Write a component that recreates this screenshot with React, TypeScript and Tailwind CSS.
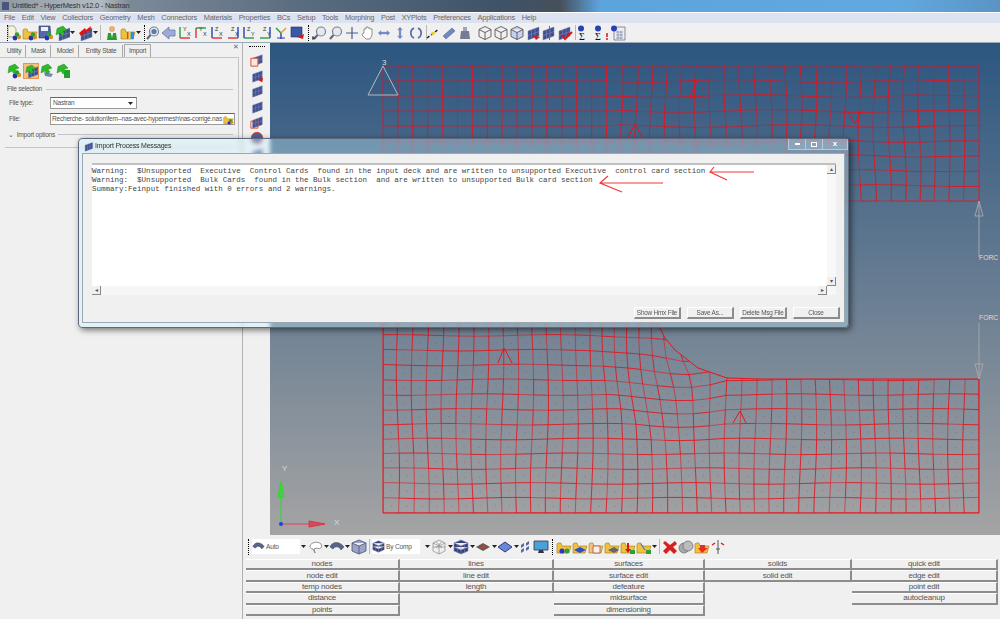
import type { ReactNode } from "react";

const sans = "font-['Liberation_Sans',Arial,sans-serif]";

const hash = (a: number, b: number) => {
  const s = Math.sin(a * 12.9898 + b * 78.233) * 43758.5453;
  return s - Math.floor(s);
};

type Pt = [number, number];

// top half of the part, mostly regular with a distorted band in the middle
const topVertex = (i: number, j: number): Pt => {
  const x = 383 + 14.9 * i;
  const y = 66 + 15 * j;
  const band = i > 15 && i < 37 ? 1 : i >= 37 ? 0.4 : 0;
  const dx = i === 0 || i === 40 ? 0 : band * 1.8 * Math.sin(i * 0.45 + j * 0.6);
  const dy = j === 0 || j === 9 ? 0 : band * 1.4 * Math.sin(i * 0.5 - j * 0.7);
  return [x + dx, y + dy];
};

// lower half: grid pushed away from the fillet
const cx = 725;
const cy = 325;
const bottomVertex = (i: number, j: number): Pt => {
  let x = 383 + 14.9 * i;
  let y = 513 - 14.8 * j;
  if (i > 0 && i < 40) x += 1.6 * Math.sin(i * 0.4 + j * 0.45);
  if (j > 0) y += 0.8 * Math.sin(i * 0.6 - j * 0.7);
  const dx = x - cx;
  const dy = y - cy;
  const d = Math.max(Math.hypot(dx, dy), 1);
  if (d < 135 && dx < 0) {
    const w = Math.min(1, (-dx / d) * 1.2);
    const p = (28 - (d * 28) / 135) * w;
    x += (dx / d) * p;
    y += (dy / d) * p;
  }
  return [x, y];
};

const MeshGrid = ({ at, cols, rows }: { at: (i: number, j: number) => Pt; cols: number; rows: number }) => {
  const out: ReactNode[] = [];
  for (let i = 0; i <= cols; i++) {
    for (let j = 0; j <= rows; j++) {
      const a = at(i, j);
      if (i < cols) {
        const b = at(i + 1, j);
        out.push(<line key={`h${i}-${j}`} x1={a[0]} y1={a[1]} x2={b[0]} y2={b[1]} opacity={hash(i, j) > 0.45 ? 0.95 : 0.65} />);
      }
      if (j < rows) {
        const b = at(i, j + 1);
        out.push(<line key={`v${i}-${j}`} x1={a[0]} y1={a[1]} x2={b[0]} y2={b[1]} opacity={hash(j, i) > 0.45 ? 0.95 : 0.65} />);
      }
      if (i < cols && j < rows) {
        const c = at(i + 1, j + 1);
        out.push(<rect key={`d${i}-${j}`} x={(a[0] + c[0]) / 2} y={(a[1] + c[1]) / 2} width={1} height={1} fill="#e8121c" stroke="none" opacity={0.4} />);
      }
    }
  }
  return <g stroke="#e8121c" strokeWidth={0.9}>{out}</g>;
};

const filletEdge = "M655 320L660 328L665 338L675 350L698 368L727 378L760 379L979 379";

const Viewport = () => (
  <svg viewBox="270 43 730 492" className="block w-[730px] h-[492px]">
    <defs>
      <clipPath id="lowerPart">
        <path d={`M383 320L655 320L660 328L665 338L675 350L698 368L727 378L760 379L979 379L979 513L383 513Z`} />
      </clipPath>
    </defs>
    <MeshGrid at={topVertex} cols={40} rows={9} />
    <g fill="none" stroke="#e8121c" strokeWidth={1}>
      <path d="M697 82L689 98L705 97" />
      <path d="M628 137L635 124L642 137M847 110L855 124L862 110" />
    </g>
    <g clipPath="url(#lowerPart)">
      <MeshGrid at={bottomVertex} cols={40} rows={13} />
    </g>
    <g fill="none" stroke="#e8121c" strokeWidth={1}>
      <path d={filletEdge} />
      <path d="M383 320L383 513L979 513L979 379" />
      <path d="M498 363L504 348L512 363M733 423L740 411L746 423" />
    </g>
    {/* constraint and loads */}
    <g fill="none" stroke="#b4b8bc" strokeWidth={1}>
      <path d="M383 66L368 95L398 95Z" />
    </g>
    <g fill="none" stroke="#a2a6aa" strokeWidth={1}>
      <path d="M979 201L979 257M979 201L975 216L983 216Z" />
      <path d="M979 323L979 379M979 379L975 364L983 364Z" />
    </g>
    <g fill="#d8dce0" fontSize={8} fontFamily="'Liberation Sans',Arial,sans-serif">
      <text x={382} y={65}>3</text>
      <text x={979} y={260} fontSize={6.8}>FORC</text>
      <text x={979} y={320} fontSize={6.8}>FORC</text>
      <text x={282} y={471}>Y</text>
      <text x={334} y={525}>X</text>
    </g>
    {/* global axes */}
    <path d="M281 524L281 490" stroke="#22e022" strokeWidth={1} />
    <path d="M281 481L278 497L284 497Z" fill="#50c850" stroke="#22e022" strokeWidth={1} />
    <path d="M281 524L310 524" stroke="#e05060" strokeWidth={1.2} />
    <path d="M325 524L309 521L309 527Z" fill="#c85060" stroke="#e83040" strokeWidth={1} />
    <circle cx={281} cy={524} r={2} fill="#2040e0" />
  </svg>
);

const Balls = () => (
  <>
    <circle cx={9} cy={13} r={2.4} fill="#2030c0" />
    <circle cx={13} cy={12} r={2.2} fill="#e09020" />
    <circle cx={11} cy={9.5} r={2.2} fill="#30a030" />
  </>
);
const Plate = ({ x = 0, y = 0 }: { x?: number; y?: number }) => (
  <g transform={`translate(${x} ${y})`}>
    <path d="M3 6L14 2L14 11L3 15Z" fill="#3f4f8f" stroke="#8088b0" strokeWidth={0.5} />
    <path d="M6.5 5L6.5 14M10 3.5L10 12.5M3 10.5L14 6.5" stroke="#7f88b8" strokeWidth={0.6} />
  </g>
);
const GreenArrow = () => <path d="M9 1L13 5L9 6.5L11 9L8 11L6 8L2 10L3 3.5Z" fill="#2fb82a" stroke="#15801a" strokeWidth={0.4} />;
const Folder = ({ c = "#f0c040" }: { c?: string }) => (
  <path d="M1 5L1 14L13 14L15 7L6 7L5 4L2 4Z" fill={c} stroke="#a07820" strokeWidth={0.6} />
);
const Axis = ({ a, b, la, lb, ca, cb }: { a: string; b: string; la: string; lb: string; ca: string; cb: string }) => (
  <>
    <path d={a} stroke={ca} strokeWidth={1.4} fill="none" />
    <path d={b} stroke={cb} strokeWidth={1.4} fill="none" />
    <text x={6} y={6} fontSize={5.5} fill="#333">{la}</text>
    <text x={10} y={11} fontSize={5.5} fill="#333">{lb}</text>
  </>
);
const Cube = ({ fill = "none" }: { fill?: string }) => (
  <path d="M8 1.5L14 4.5L14 11.5L8 14.5L2 11.5L2 4.5ZM2 4.5L8 7.5L14 4.5M8 7.5L8 14.5" fill={fill} stroke="#444" strokeWidth={0.8} />
);
const Lens = () => (
  <>
    <circle cx={9} cy={6.5} r={4.5} fill="#e4e8f0" stroke="#7a8090" strokeWidth={1.2} />
    <path d="M5.5 10L2 14" stroke="#606878" strokeWidth={2} />
  </>
);

const icons: Record<string, ReactNode> = {
  newModel: (<><path d="M2 1L8 1L10 4L10 12L2 12Z" fill="#f4f4d8" stroke="#777" strokeWidth={0.6} /><Balls /></>),
  openModel: (<><Folder /><Balls /></>),
  saveModel: (<><path d="M1 1L12 1L13 13L1 13Z" fill="#5568a8" stroke="#334" strokeWidth={0.6} /><path d="M3 2L10 2L10 6L3 6Z" fill="#eef" /><Balls /></>),
  importPlate: (<><Plate x={2} y={1} /><GreenArrow /></>),
  exportPlate: (<><Plate x={1} y={1} /><path d="M2 8L8 3L9 5L14 1L13 6L10 6L9 8L4 11Z" fill="#d81818" /></>),
  person: (<><circle cx={8} cy={4} r={3} fill="#e0b080" /><path d="M3 15L4 8L12 8L13 15Z" fill="#2c9c30" /><path d="M7 8L9 8L8 13Z" fill="#fff" /></>),
  colorFolder: (<><Folder /><path d="M7 7L14 7L14 14L7 14Z" fill="#e84030" /><path d="M10 7L14 7L14 14L10 14Z" fill="#3090e0" /><path d="M8.5 7L10.5 7L10.5 14L8.5 14Z" fill="#f0e030" /></>),
  globeLens: (<><Lens /><circle cx={9} cy={6.5} r={2.6} fill="#5878b8" /></>),
  leftArrow: <path d="M1 8L8 2L8 5L14 5L14 11L8 11L8 14Z" fill="#a0aad8" stroke="#6a78a8" strokeWidth={0.8} />,
  axXY: <Axis a="M3 2L3 13" b="M3 13L13 13" la="Y" lb="X" ca="#20a040" cb="#e03030" />,
  axYX: <Axis a="M3 13L3 3" b="M3 3L13 3" la="Y" lb="X" ca="#e03030" cb="#20a040" />,
  axZX: <Axis a="M3 2L3 13" b="M3 13L13 13" la="Z" lb="X" ca="#2040c0" cb="#e03030" />,
  axXZ: <Axis a="M13 2L13 13" b="M13 13L3 13" la="Z" lb="X" ca="#2040c0" cb="#e03030" />,
  axZY: <Axis a="M3 2L3 13" b="M3 13L13 13" la="Z" lb="Y" ca="#2040c0" cb="#20a040" />,
  axYZ: <Axis a="M13 2L13 13" b="M13 13L3 13" la="Z" lb="Y" ca="#2040c0" cb="#20a040" />,
  ax3d: (<><path d="M8 8L8 14" stroke="#2040c0" strokeWidth={1.4} /><path d="M8 8L3 3" stroke="#20a040" strokeWidth={1.4} /><path d="M8 8L13 3" stroke="#e0a020" strokeWidth={1.4} /><path d="M4 13L12 13" stroke="#2040c0" strokeWidth={1} /></>),
  plateRed: (<><path d="M2 2L13 2L13 12L2 12Z" fill="#3858a8" stroke="#20306a" strokeWidth={0.6} /><path d="M8 12L15 9L14 14Z" fill="#d81818" /></>),
  zoomIn: (<><Lens /><path d="M1 11L1 15M0 13L3 13" stroke="#111" strokeWidth={0.8} /></>),
  zoomOut: <Lens />,
  cross: <path d="M8 2L8 14M2 8L14 8" stroke="#4a5a90" strokeWidth={1.2} />,
  hand: <path d="M4 8L4 4L6 4L6 2L8 2L8 3L10 3L10 4L12 4L12 10L10 14L6 14L2 10L3 8Z" fill="#fff" stroke="#777" strokeWidth={0.8} />,
  panH: <path d="M2 8L5 5.5L5 7L11 7L11 5.5L14 8L11 10.5L11 9L5 9L5 10.5Z" fill="#7084c4" stroke="#a0aad8" strokeWidth={0.4} />,
  panV: <path d="M8 2L10.5 5L9 5L9 11L10.5 11L8 14L5.5 11L7 11L7 5L5.5 5Z" fill="#7084c4" stroke="#a0aad8" strokeWidth={0.4} />,
  rotate: <path d="M6 3A5.5 5.5 0 0 0 6 13M10 3A5.5 5.5 0 0 1 10 13" fill="none" stroke="#5a6aa8" strokeWidth={1.6} />,
  measure: (<><path d="M2 13L14 4" stroke="#222" strokeWidth={1.5} strokeDasharray="3 2" /><circle cx={8} cy={8.5} r={1.8} fill="#e8d020" /></>),
  rod: <path d="M2 11L11 3L14 6L5 14Z" fill="#7088c0" stroke="#4a5a90" strokeWidth={0.5} />,
  weight: (<><path d="M3 14L4 6L12 6L13 14Z" fill="#767c94" /><path d="M6 6L6 2L10 2L10 6" fill="#a0a4b8" /></>),
  cube: <Cube />,
  cubeShade: <Cube fill="#c8d0f0" />,
  plateDrop: (<><Plate /><path d="M8 10L15 12L11 15Z" fill="#d81818" /></>),
  plateMid: (<><Plate x={-1} /><path d="M8 1L9 1L9 15L8 15Z" fill="#d84040" /></>),
  plateCheck: (<><Plate x={-1} /><path d="M5 10L8 14L15 7" fill="none" stroke="#d81818" strokeWidth={2} /></>),
  sigma: (<><circle cx={5} cy={3.5} r={3} fill="#2840b8" /><text x={3} y={15} fontSize={10} fill="#111" fontFamily="'Liberation Serif',serif">Σ</text></>),
  sigmaBang: (<><circle cx={5} cy={3.5} r={3} fill="#2840b8" /><text x={2} y={15} fontSize={10} fill="#111" fontFamily="'Liberation Serif',serif">Σ</text><path d="M14 8L14 12M14 13L14 15" stroke="#d81818" strokeWidth={1.5} /></>),
  calc: (<><path d="M4 2L15 2L15 15L4 15Z" fill="#e8ecf4" stroke="#667" strokeWidth={0.7} /><path d="M6 7L13 7M6 10L13 10M6 13L13 13M8 6L8 14M11 6L11 14" stroke="#8890a8" strokeWidth={0.8} /><circle cx={4} cy={3.5} r={3} fill="#2840b8" /></>),
  solverWing: (<><path d="M5 9L14 11L12 14L6 13Z" fill="#7a84b0" /><GreenArrow /></>),
  solverCan: (<><path d="M9 7L15 7L15 15L9 15Z" fill="#24a030" /><GreenArrow /></>),
  solverBalls: (<><Balls /><GreenArrow /></>),
  vp1: (<><Plate /><path d="M1 6L9 6L9 15L1 15Z" fill="#f4e8e0" stroke="#e04020" strokeWidth={1} /></>),
  vp2: (<><Plate /><path d="M8 12L15 10L14 15Z" fill="#d81818" /></>),
  vp3: <Plate />,
  vp5: (<><Plate /><path d="M1 7L9 7L9 15L1 15Z" fill="none" stroke="#e04020" strokeWidth={1} /></>),
  vp6: (<><circle cx={8} cy={8} r={6.5} fill="#50609a" stroke="#e04020" strokeWidth={1} /></>),
  cloud: <path d="M2 7C3 3 10 2 13 5C15 8 12 11 9 9L6 10L7 14L5 10C3 10 2 9 2 7Z" fill="#fff" stroke="#777" strokeWidth={0.8} />,
  shell: <path d="M1 8C3 2 11 2 15 8L12 11C10 7 6 7 4 10Z" fill="#5a6486" stroke="#3a4060" strokeWidth={0.5} />,
  solidCube: <path d="M8 1L15 4L15 12L8 15L1 12L1 4ZM1 4L8 7L15 4M8 7L8 15" fill="#9aa4c8" stroke="#4a5070" strokeWidth={0.8} />,
  wireBall: <path d="M8 1L14 4L14 12L8 15L2 12L2 4ZM2 4L8 7L14 4M8 7L8 15M5 2.5L11 9M11 2.5L5 9M2 8L14 8" fill="none" stroke="#777" strokeWidth={0.6} />,
  darkCube: <path d="M8 1L15 4L15 12L8 15L1 12L1 4ZM1 4L8 7L15 4M8 7L8 15M4.5 5.5L4.5 13.5M11.5 5.5L11.5 13.5M1 8L8 11L15 8" fill="#36407a" stroke="#8088b0" strokeWidth={0.6} />,
  flatRed: (<><path d="M1 8L8 4L15 8L8 12Z" fill="#665a5a" /><path d="M5 8L8 6L11 8L8 10Z" fill="#c04030" /></>),
  flatBlue: <path d="M1 8L8 3L15 8L8 13Z" fill="#6a88d8" stroke="#2c3c80" strokeWidth={1} />,
  dots: <path d="M4 6L7 4L7 7L4 9ZM9 4L12 2L12 5L9 7ZM4 11L7 9L7 12L4 14ZM9 9L12 7L12 10L9 12Z" fill="#5a66a8" />,
  monitor: (<><path d="M1 2L15 2L15 11L1 11Z" fill="#4aa0d8" stroke="#334" strokeWidth={0.8} /><path d="M6 11L10 11L11 14L5 14Z" fill="#334" /></>),
  fBalls: (<><Folder /><circle cx={6} cy={12} r={2.6} fill="#2a3ac0" /><circle cx={11} cy={12} r={2.4} fill="#30a030" /></>),
  fPlate: (<><Folder /><path d="M2 11L8 8L14 11L8 14Z" fill="#2a50c8" /></>),
  fDoc: (<><Folder c="#f4c080" /><path d="M5 7L12 7L12 14L5 14Z" fill="#f8f0e8" stroke="#a04020" strokeWidth={0.7} /></>),
  fGray: (<><Folder /><path d="M4 11L10 8L15 11L10 14Z" fill="#666" /></>),
  fRed: (<><Folder /><path d="M7 4L9 4L9 10L11 10L8 14L5 10L7 10Z" fill="#d81818" /><path d="M10 11L15 11L15 15L10 15Z" fill="#30a030" /></>),
  fGreen: (<><Folder /><path d="M5 5L9 11" stroke="#5070c0" strokeWidth={1.2} /><path d="M10 11L15 11L15 15L10 15Z" fill="#30a030" /></>),
  xRed: <path d="M3 2L8 6L13 2L15 5L11 8L15 12L12 15L8 11L4 15L1 12L5 8L1 4Z" fill="#d82020" />,
  gears: (<><circle cx={6} cy={9} r={5} fill="#a8a8a8" stroke="#666" strokeWidth={0.7} /><circle cx={10} cy={7} r={5} fill="#bcbcbc" stroke="#666" strokeWidth={0.7} /></>),
  fArrow: (<><Folder c="#f4c040" /><path d="M6 6L11 6L11 9L14 9L8 14L4 9L6 9Z" fill="#e03020" /></>),
  tri123: (<><path d="M8 1L8 15" stroke="#555" strokeWidth={1} /><path d="M2 6L5 4M14 6L11 4" stroke="#d81818" strokeWidth={1.4} /><path d="M6 10L10 10" stroke="#555" strokeWidth={1} /></>),
};

const Icon = ({ k, size = 16 }: { k: string; size?: number }) => (
  <svg viewBox="0 0 16 16" className="block shrink-0" width={size} height={size}>
    {icons[k]}
  </svg>
);

const Caret = () => (
  <svg viewBox="0 0 5 3" className="block w-[5px] h-[3px] shrink-0">
    <path d="M0 0L5 0L2.5 3Z" fill="#222" />
  </svg>
);

const Dots = () => <div className="h-[16px] w-0 border-l border-dotted border-black mx-[3px] shrink-0" />;
const Sep = () => <div className="h-[15px] w-px bg-[#b8b8b8] mx-[2px] shrink-0" />;

const menus = ["File", "Edit", "View", "Collectors", "Geometry", "Mesh", "Connectors", "Materials", "Properties", "BCs", "Setup", "Tools", "Morphing", "Post", "XYPlots", "Preferences", "Applications", "Help"];

const tabs = [
  { label: "Utility", w: "w-[23px]" },
  { label: "Mask", w: "w-[24px]" },
  { label: "Model", w: "w-[27px]" },
  { label: "Entity State", w: "w-[43px]" },
];

const TopToolbar = () => (
  <div className="h-[20px] flex items-center pl-[4px] bg-[#f0f0f0] border-b border-[#9aa8b8]">
    <Dots />
    <div className="flex ml-[-5px]">
      {["newModel", "openModel", "saveModel"].map((k) => <Icon key={k} k={k} />)}
    </div>
    <Icon k="importPlate" /><div className="mr-[2px]"><Caret /></div>
    <Icon k="exportPlate" /><Caret />
    <Sep />
    <div className="ml-[1px]"><Icon k="person" /></div>
    <Icon k="colorFolder" /><Caret />
    <Dots />
    <div className="flex ml-[-3px]">
      {["globeLens", "leftArrow", "axXY", "axYX", "axZX", "axXZ", "axZY", "axYZ", "ax3d", "plateRed"].map((k) => <Icon key={k} k={k} />)}
    </div>
    <Dots />
    {["zoomIn", "zoomOut", "cross", "hand", "panH", "panV", "rotate"].map((k) => <Icon key={k} k={k} />)}
    <Sep />
    <div className="flex ml-[-4px]">
      {["measure", "rod", "weight"].map((k) => <Icon key={k} k={k} />)}
    </div>
    <div className="flex ml-[4px]">
      {["cube", "cube", "cubeShade", "plateDrop", "plateMid", "plateCheck"].map((k, n) => <Icon key={n} k={k} />)}
    </div>
    <Sep />
    <div className="flex ml-[-2px] gap-px">
      {["sigma", "sigmaBang", "calc"].map((k) => <Icon key={k} k={k} />)}
    </div>
  </div>
);

const LeftPanel = () => (
  <aside className={`w-[243px] shrink-0 bg-[#f0f0f0] border-r border-[#b0b0b0] text-[6.6px] tracking-[-0.25px] text-[#555] ${sans}`}>
    <div className="h-[14px] flex items-end pl-[3px] pr-[3px]">
      {tabs.map((t) => (
        <div key={t.label} className={`${t.w} h-[12px] mr-px flex items-center justify-center whitespace-nowrap border-r border-[#a8a8a8]`}>{t.label}</div>
      ))}
      <div className="w-[27px] h-[13px] flex items-center justify-center border border-b-0 border-[#a8a8a8]">Import</div>
      <span className="ml-auto self-start text-[7px] leading-[7px] text-[#666]">✕</span>
    </div>
    <div className="mr-[3px] border-t border-r border-[#c4c4c4] pt-[4px] pb-[2px]">
      <div className="flex items-center pl-[6px] h-[17px]">
        <Icon k="solverBalls" />
        <div className="bg-[#f8c080] border border-[#e09850] ml-px"><Icon k="importPlate" size={14} /></div>
        <Icon k="solverWing" />
        <Icon k="solverCan" />
      </div>
      <div className="flex items-center gap-[4px] pl-[7px] pr-[5px] mt-[5px] h-[10px]">
        <span>File selection</span>
        <div className="h-px flex-1 bg-[#c4c4c4]" />
      </div>
      <div className="flex items-center pl-[9px] h-[14px] mt-[2px]">
        <span className="w-[41px]">File type:</span>
        <div className="w-[87px] h-[12px] bg-white border border-[#9a9a9a] border-t-[#666] flex items-center justify-between pl-[2px] pr-[3px]">
          <span>Nastran</span>
          <Caret />
        </div>
      </div>
      <div className="flex items-center pl-[9px] h-[14px] mt-[2px] pr-[3px]">
        <span className="w-[41px]">File:</span>
        <div className="flex-1 h-[12px] bg-white border border-[#9a9a9a] border-t-[#666] flex items-center justify-between pl-[1px]">
          <span className="whitespace-nowrap">Recherche- solution\fem--nas-avec-hypermesh\nas-corrigé.nas</span>
          <Icon k="openModel" size={11} />
        </div>
      </div>
      <div className="flex items-center gap-[3px] pl-[8px] pr-[5px] mt-[3px] h-[11px]">
        <span className="text-[7px] leading-[7px]">⌄</span>
        <span>Import options</span>
        <div className="h-px flex-1 bg-[#c4c4c4]" />
      </div>
      <div className="h-px bg-[#c4c4c4] mx-[5px] mt-[7px]" />
    </div>
  </aside>
);

const VerticalToolbar = () => (
  <div className="w-[27px] shrink-0 bg-[#f0f0f0] flex flex-col items-center pt-[3px]">
    <div className="w-[16px] border-t border-dotted border-black mb-[6px]" />
    <div className="flex flex-col gap-[1.6px]">
      {["vp1", "vp2", "vp3", "vp3", "vp5", "vp6", "vp3"].map((k, n) => <Icon key={n} k={k} size={14} />)}
    </div>
  </div>
);

const BottomToolbar = () => (
  <div className={`h-[23px] flex items-center bg-[#f0f0f0] text-[6.6px] tracking-[-0.2px] text-[#555] pl-[2px] ${sans}`}>
    <Dots />
    <div className="w-[48px] h-[15px] bg-white flex items-center ml-[0px]">
      <Icon k="shell" size={13} />
      <span className="ml-[1px]">Auto</span>
    </div>
    <div className="mx-[1px]"><Caret /></div>
    <div className="ml-[1px]"><Icon k="cloud" /></div><Caret />
    <Icon k="shell" /><Caret />
    <div className="ml-[1px]"><Icon k="solidCube" /></div>
    <Sep />
    <div className="w-[48px] h-[15px] bg-white flex items-center">
      <Icon k="darkCube" size={13} />
      <span className="ml-[1px]">By Comp</span>
    </div>
    <div className="ml-[5px] mr-[1px]"><Caret /></div>
    {["wireBall", "darkCube", "flatRed", "flatBlue"].map((k) => (
      <div key={k} className="flex items-center"><Icon k={k} /><div className="ml-[1px]"><Caret /></div></div>
    ))}
    <div className="ml-[-2px]"><Icon k="dots" /></div>
    <Icon k="monitor" />
    <Dots />
    {["fBalls", "fPlate", "fDoc", "fGray", "fRed", "fGreen"].map((k) => <Icon key={k} k={k} />)}
    <Caret />
    <Sep />
    {["xRed", "gears", "fArrow", "tri123"].map((k) => <Icon key={k} k={k} />)}
  </div>
);

const PanelButton = ({ label }: { label: string }) => (
  <div className="h-[11.4px] flex items-center justify-center border-t border-t-white border-r-2 border-b-2 border-r-[#8c8c8c] border-b-[#8c8c8c] text-[8px] tracking-[-0.2px] leading-none text-[#555]">
    {label}
  </div>
);

const columns = [
  { w: "w-[154px]", items: ["nodes", "node edit", "temp nodes", "distance", "points"] },
  { w: "w-[154px]", items: ["lines", "line edit", "length"] },
  { w: "w-[151px]", items: ["surfaces", "surface edit", "defeature", "midsurface", "dimensioning"] },
  { w: "w-[147px]", items: ["solids", "solid edit"] },
  { w: "w-[146px]", items: ["quick edit", "edge edit", "point edit", "autocleanup"] },
];

const ButtonPanel = () => (
  <div className={`flex-1 flex items-start bg-[#f0f0f0] pl-[3px] pt-px ${sans}`}>
    {columns.map((c) => (
      <div key={c.items[0]} className={`${c.w} flex flex-col`}>
        {c.items.map((b) => <PanelButton key={b} label={b} />)}
      </div>
    ))}
  </div>
);

const DialogButton = ({ label }: { label: string }) => (
  <div className="w-[47px] h-[12px] shrink-0 flex items-center justify-center bg-[#f0f0f0] border-t border-l border-white border-r-2 border-b-2 border-r-[#8c8c8c] border-b-[#8c8c8c] text-[6.4px] tracking-[-0.2px] text-[#555] whitespace-nowrap">
    {label}
  </div>
);

const ImportDialog = () => (
  <div className={`absolute left-[78px] top-[138px] w-[771px] h-[190px] rounded-[4px] border border-[#5a6a7c] bg-[#c8f4ff]/35 backdrop-blur-[2px] shadow-[2px_2px_6px_rgba(0,0,0,0.55)] flex flex-col ${sans}`}>
    <div className="h-[14px] flex items-center pl-[4px] shrink-0">
      <Icon k="vp3" size={11} />
      <span className="ml-[1px] text-[7px] tracking-[-0.2px] text-[#333]">Import Process Messages</span>
      <div className="ml-auto flex h-[11px] self-start text-[#fff]">
        <div className="w-[17px] border-l border-b border-white/40 bg-white/15 flex items-center justify-center"><div className="w-[5px] h-[2px] bg-white" /></div>
        <div className="w-[17px] border-l border-b border-white/40 bg-white/15 flex items-center justify-center"><div className="w-[6px] h-[5px] border border-white" /></div>
        <div className="w-[26px] border-x border-b border-white/40 bg-white/15 flex items-center justify-center text-[8px] font-bold leading-none">x</div>
      </div>
    </div>
    <div className="mx-[3px] mb-[4px] flex-1 bg-[#f0f0f0] border border-[#9aa8b4] pl-[9px] pr-[8px] pt-[9px]">
      <div className="relative h-[132px] bg-white border-t-2 border-[#c0c0c0]">
        <div className="font-['Liberation_Mono','Courier_New',monospace] text-[7.53px] leading-[9px] text-[#444] whitespace-pre pt-[2px]">
          <div>Warning:  $Unsupported  Executive  Control Cards  found in the input deck and are written to unsupported Executive  control card section</div>
          <div>Warning:  $Unsupported  Bulk Cards  found in the Bulk section  and are written to unsupported Bulk card section</div>
          <div>Summary:Feinput finished with 0 errors and 2 warnings.</div>
        </div>
        {/* scrollbars */}
        <div className="absolute right-0 top-0 bottom-[9px] w-[9px] bg-[#f8f8f8] flex flex-col justify-between">
          <div className="h-[9px] bg-[#f0f0f0] border-r border-b border-[#888] text-[6px] leading-[8px] text-center text-[#555]">▴</div>
          <div className="h-[9px] bg-[#f0f0f0] border-r border-b border-[#888] text-[6px] leading-[8px] text-center text-[#555]">▾</div>
        </div>
        <div className="absolute left-0 right-0 bottom-0 h-[9px] bg-[#f6f6f6] flex justify-between pr-[9px]">
          <div className="w-[9px] bg-[#f0f0f0] border-r border-b border-[#888] text-[6px] leading-[8px] text-center text-[#555]">◂</div>
          <div className="w-[9px] bg-[#f0f0f0] border-r border-b border-[#888] text-[6px] leading-[8px] text-center text-[#555]">▸</div>
        </div>
      </div>
      <div className="flex justify-end gap-[6px] mt-[12px] mr-[-4px]">
        {["Show Hmx File", "Save As...", "Delete Msg File", "Close"].map((b) => <DialogButton key={b} label={b} />)}
      </div>
    </div>
    {/* hand-drawn red arrows from the forum post */}
    <svg viewBox="78 138 771 190" className="absolute left-0 top-0 w-[771px] h-[190px] pointer-events-none">
      <g fill="none" stroke="#f03838" strokeWidth={1.2}>
        <path d="M753 171L709 171M713 166L709 171L726 179" />
        <path d="M662 182L599 182M607 175L599 182L621 191" />
      </g>
    </svg>
  </div>
);

export default function App() {
  return (
    <div className={`relative w-[1000px] h-[619px] overflow-hidden flex flex-col blur-[0.35px] bg-[#f0f0f0] ${sans}`}>
      <div className="h-[13px] shrink-0 flex items-center pl-[2px] border-b border-white bg-[linear-gradient(90deg,#8d98a2_0%,#b4bcc2_10%,#7c8a98_13%,#5a6c80_30%,#3f5368_50%,#464f5a_56%,#5ca4de_60%,#62a8e0_90%,#5a94c4_100%)]">
        <div className="w-[7px] h-[8px] bg-[#4a5580] mr-[3px]" />
        <span className="text-[7.5px] tracking-[-0.25px] leading-none text-[#333]">Untitled* - HyperMesh v12.0 - Nastran</span>
      </div>
      <div className="h-[10px] shrink-0 flex items-center gap-[6.7px] pl-[4px] bg-[#dde2f0] text-[7.4px] tracking-[-0.2px] leading-none text-[#666]">
        {menus.map((m) => <span key={m}>{m}</span>)}
      </div>
      <TopToolbar />
      <div className="flex-1 flex min-h-0">
        <LeftPanel />
        <div className="flex-1 flex flex-col min-w-0">
          <div className="h-[492px] flex shrink-0">
            <VerticalToolbar />
            <div className="flex-1 bg-[linear-gradient(180deg,#2c5680_0%,#a4a4a4_100%)]">
              <Viewport />
            </div>
          </div>
          <BottomToolbar />
          <ButtonPanel />
        </div>
      </div>
      <ImportDialog />
    </div>
  );
}
